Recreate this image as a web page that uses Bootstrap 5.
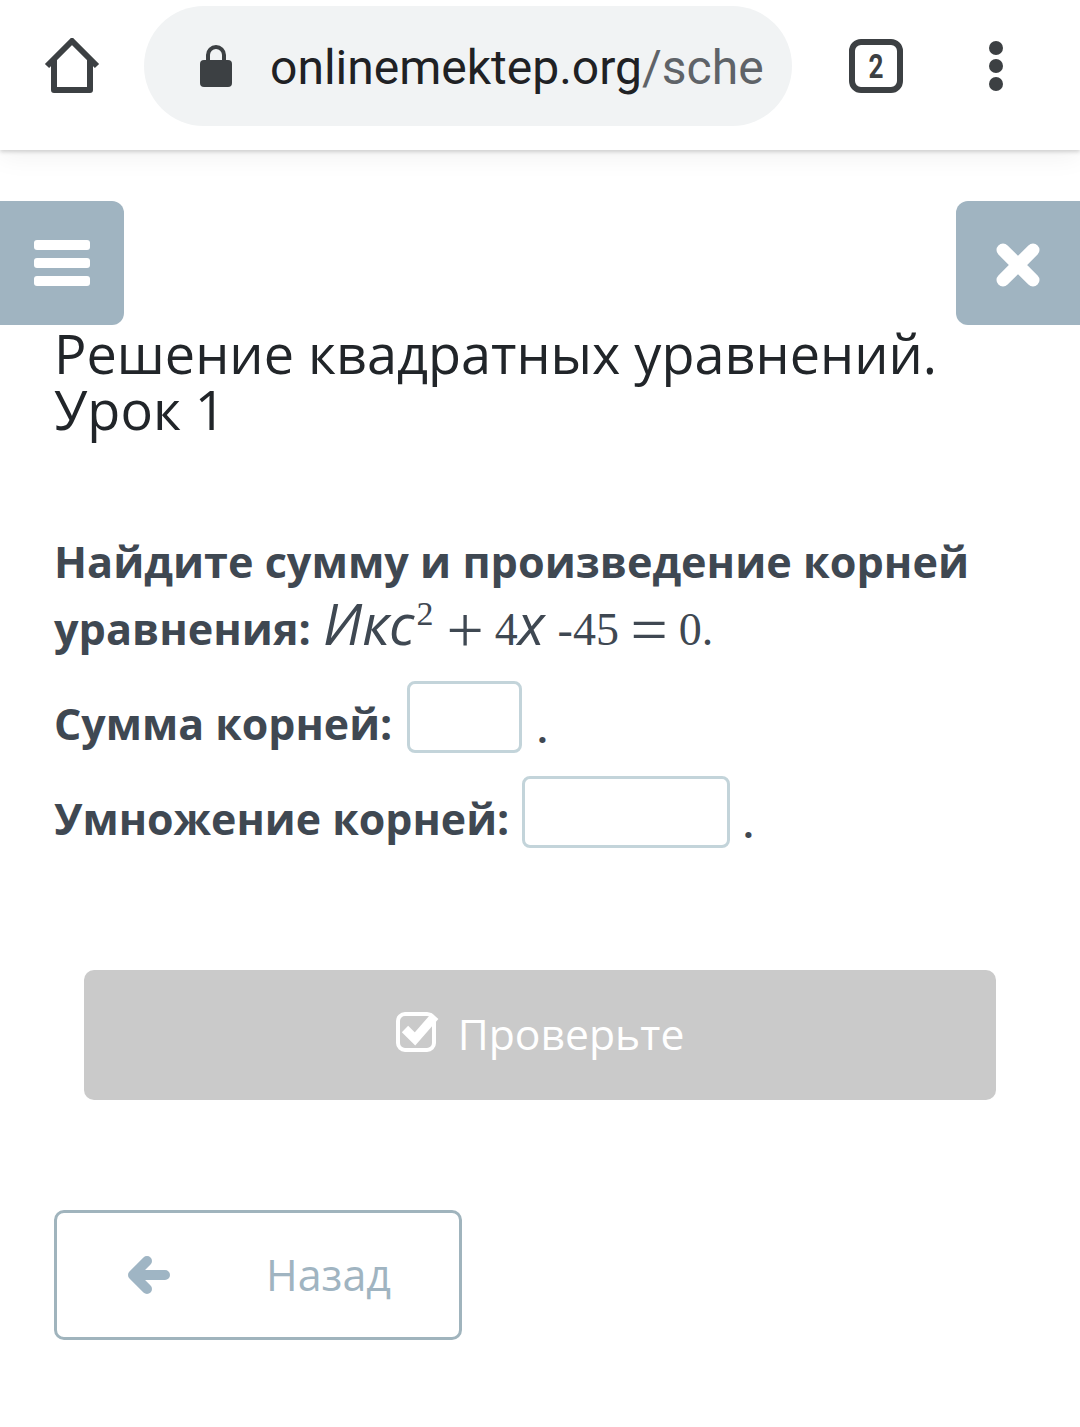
<!DOCTYPE html>
<html lang="ru">
<head>
    <meta charset="UTF-8">
    <meta name="viewport" content="width=device-width, initial-scale=1.0">
    <title>Решение квадратных уравнений</title>
    <link href="https://cdn.jsdelivr.net/npm/bootstrap@5.3.0/dist/css/bootstrap.min.css" rel="stylesheet">
    <style>
        body {
            background-color: #fff;
            font-family: "Open Sans", "Noto Sans", sans-serif;
            color: #3f4852;
        }
        .browser-bar {
            height: 150px;
            padding-left: 44px;
            box-shadow: 0 2px 4px rgba(0,0,0,0.16), 0 8px 24px rgba(0,0,0,0.05);
            background-color: #fff;
        }
        .url-pill {
            width: 648px;
            height: 120px;
            margin-top: -18px;
            margin-left: 44px;
            padding-left: 55px;
            background-color: #f1f3f4;
            border-radius: 60px;
            font-family: Roboto, sans-serif;
            font-size: 48px;
            white-space: nowrap;
            overflow: hidden;
            color: #202124;
        }
        .url-text { margin-left: 13px; padding-top: 4px; }
        .url-rest { color: #5f6368; }
        .home-icon { margin-top: -18px; }
        .tab-count { margin-left: 56px; margin-top: -18px; }
        .more-dots { margin-left: 84px; margin-top: -18px; }
        .side-btn {
            width: 124px;
            height: 124px;
            background-color: #a0b4c1;
        }
        .side-left { border-radius: 0 12px 12px 0; }
        .side-right { border-radius: 12px 0 0 12px; padding-top: 4px; }
        .top-actions { margin-top: 51px; }
        .lesson-body { padding-left: 54px; padding-right: 54px; }
        .lesson-title {
            font-size: 54px;
            line-height: 56px;
            font-weight: 400;
            color: #212529;
            margin: 0;
        }
        .task-text {
            margin-top: 91px;
            font-size: 43.2px;
            line-height: 67px;
            font-weight: 700;
        }
        .math-part {
            font-family: "Liberation Serif", serif;
            font-weight: 400;
            font-size: 46px;
            line-height: 0;
            margin-left: 1px;
        }
        .math-part i {
            font-family: "Open Sans", sans-serif;
            font-size: 56px;
            line-height: 0;
        }
        .math-part sup { font-size: 34px; top: -0.6em; line-height: 0; margin-left: 2px; margin-right: 13px; }
        .math-op { font-size: 66px; line-height: 0; margin-right: 11px; vertical-align: -7px; }
        .math-gap { margin-right: 13px; }
        .answer-row {
            font-size: 42.9px;
            font-weight: 700;
            gap: 13px;
            height: 72px;
        }
        .answer-label { padding-top: 14px; }
        .sum-row { margin-top: 19px; gap: 15px; }
        .product-row { margin-top: 23px; }
        .answer-input {
            height: 72px;
            border: 3px solid #c3d4da;
            border-radius: 8px;
            background: #fff;
            padding: 0;
        }
        .sum-input { width: 115px; }
        .product-input { width: 208px; }
        .dot-after { font-weight: 700; font-size: 36px; padding-top: 26px; }
        .check-btn {
            display: flex;
            margin: 122px 30px 0;
            height: 130px;
            width: 912px;
            background-color: #cacaca;
            border: 0;
            border-radius: 10px;
            color: #fff;
            font-size: 42.7px;
            gap: 18px;
        }
        .check-icon { margin-top: -8px; }
        .check-label { margin-top: -2px; }
        .back-btn {
            width: 408px;
            height: 130px;
            margin-top: 110px;
            border: 3px solid #a0b4bd;
            border-radius: 10px;
            background: #fff;
            color: #a0b4c1;
            font-size: 43px;
            padding-left: 71px;
            gap: 96px;
        }
    </style>
</head>
<body>

<div class="browser-bar d-flex align-items-center">
    <svg class="home-icon" width="56" height="56" viewBox="0 0 56 56" fill="none" stroke="#3c4043" stroke-width="6" stroke-linejoin="round">
        <path d="M3 28 L28 3 L53 28 M10 21 V52 H46 V21"/>
    </svg>
    <div class="url-pill d-flex align-items-center">
        <svg width="34" height="44" viewBox="0 0 34 44" class="me-4 flex-shrink-0">
            <path d="M9 18 V11 a8 8 0 0 1 16 0 V18" fill="none" stroke="#3c4043" stroke-width="4"/>
            <rect x="1" y="16" width="32" height="27" rx="4" fill="#3c4043"/>
        </svg>
        <span class="url-text">onlinemektep.org<span class="url-rest">/sche</span></span>
    </div>
    <svg class="tab-count" width="56" height="56" viewBox="0 0 56 56">
        <rect x="4" y="4" width="48" height="48" rx="9" fill="none" stroke="#3c4043" stroke-width="6"/>
        <text x="28" y="40" text-anchor="middle" font-family="Roboto, sans-serif" font-weight="700" font-size="33" fill="#3c4043" textLength="15" lengthAdjust="spacingAndGlyphs">2</text>
    </svg>
    <svg class="more-dots" width="16" height="50" viewBox="0 0 16 50" fill="#3c4043">
        <circle cx="8" cy="7" r="7"/><circle cx="8" cy="25" r="7"/><circle cx="8" cy="43" r="7"/>
    </svg>
</div>

<div class="top-actions d-flex justify-content-between">
    <div class="side-btn side-left d-flex align-items-center justify-content-center">
        <svg width="56" height="46" viewBox="0 0 56 46" fill="#fff">
            <rect width="56" height="10" y="0" rx="3"/><rect width="56" height="10" y="18" rx="3"/><rect width="56" height="10" y="36" rx="3"/>
        </svg>
    </div>
    <div class="side-btn side-right d-flex align-items-center justify-content-center">
        <svg width="44" height="44" viewBox="0 0 44 44" stroke="#fff" stroke-width="13" stroke-linecap="round">
            <path d="M7 7 L37 37 M37 7 L7 37"/>
        </svg>
    </div>
</div>

<div class="lesson-body">
    <h1 class="lesson-title">Решение квадратных уравнений. Урок 1</h1>

    <div class="task-text">
        Найдите сумму и произведение корней уравнения: <span class="math-part"><i>Икс</i><sup>2</sup><span class="math-op">+</span>4<i class="math-gap">х</i>-45 <span class="math-op">=</span>0.</span>
    </div>

    <div class="answer-row sum-row d-flex align-items-center">
        <span class="answer-label">Сумма корней:</span>
        <input class="answer-input sum-input" type="text" aria-label="Сумма корней">
        <span class="dot-after">.</span>
    </div>
    <div class="answer-row product-row d-flex align-items-center">
        <span class="answer-label">Умножение корней:</span>
        <input class="answer-input product-input" type="text" aria-label="Умножение корней">
        <span class="dot-after">.</span>
    </div>

    <button class="check-btn btn align-items-center justify-content-center" type="button">
        <svg class="check-icon" width="44" height="42" viewBox="0 0 44 42" fill="none">
            <rect x="2" y="4" width="36" height="36" rx="7" stroke="#fff" stroke-width="4"/>
            <path d="M9 19 L19 29 L39 6" stroke="#fff" stroke-width="9"/>
        </svg>
        <span class="check-label">Проверьте</span>
    </button>

    <div class="back-btn d-flex align-items-center">
        <svg width="42" height="38" viewBox="0 0 42 38" fill="none" stroke="#9fb5c4" stroke-width="10" stroke-linecap="round" stroke-linejoin="round" class="flex-shrink-0">
            <path d="M37 19 H6 M19 5 L5 19 L19 33"/>
        </svg>
        <span>Назад</span>
    </div>
</div>

<script src="https://cdn.jsdelivr.net/npm/bootstrap@5.3.0/dist/js/bootstrap.bundle.min.js"></script>
</body>
</html>
